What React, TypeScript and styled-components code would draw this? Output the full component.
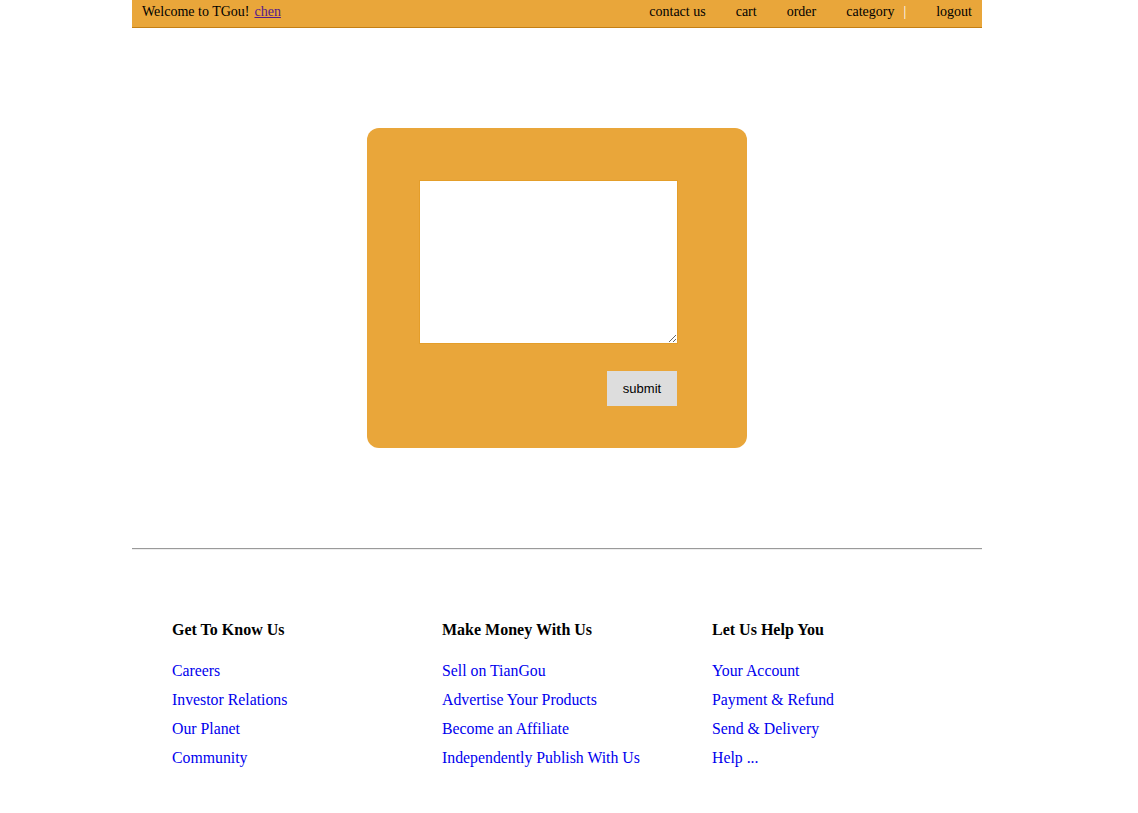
import React from "react";
import styled, { createGlobalStyle } from "styled-components";

const Global = createGlobalStyle`
  html, body { margin: 0; padding: 0; background: #fff; }
  body { font-family: "Liberation Serif", "Times New Roman", serif; font-size: 16px; color: #000; }
`;

const Page = styled.div`
  width: 850px;
  margin-left: 132px;
`;

const TopBar = styled.header`
  display: flex;
  align-items: flex-start;
  justify-content: space-between;
  height: 27px;
  line-height: 23px;
  padding: 0 10px;
  background: #e9a63a;
  border-bottom: 1px solid #c47f14;
  font-size: 14px;
`;

const Welcome = styled.div`
  display: flex;
  gap: 5px;
`;

const UserLink = styled.a`
  color: #551a8b;
  text-decoration: underline;
  font-size: 14px;
`;

const Nav = styled.nav`
  display: flex;
  gap: 30px;
`;

const NavItem = styled.a`
  color: #000;
  text-decoration: none;
`;

const Sep = styled.span`
  color: #fff;
  margin-left: -21px;
`;

const Main = styled.main`
  display: flex;
  justify-content: center;
  padding: 100px 0;
`;

const Panel = styled.form`
  width: 380px;
  height: 320px;
  box-sizing: border-box;
  background: #e9a63a;
  border-radius: 12px;
  padding: 52px 0 0 52px;
  display: flex;
  flex-direction: column;
  align-items: flex-start;
`;

const Area = styled.textarea`
  width: 259px;
  height: 164px;
  box-sizing: border-box;
  border: 1px solid #e49e2a;
  background: #fff;
  outline: none;
  margin: 0;
  padding: 2px;
  resize: both;
  font-family: "Liberation Mono", monospace;
  font-size: 13px;
`;

const SubmitRow = styled.div`
  width: 258px;
  display: flex;
  justify-content: flex-end;
  margin-top: 27px;
`;

const SubmitButton = styled.button`
  width: 70px;
  height: 35px;
  border: none;
  background: #dddddd;
  font-family: "Liberation Sans", Arial, sans-serif;
  font-size: 13px;
  color: #000;
  padding: 0;
  cursor: pointer;
`;

const Rule = styled.hr`
  margin: 0;
  border: none;
  border-top: 1px solid #9a9a9a;
  border-bottom: 1px solid #eeeeee;
`;

const Footer = styled.footer`
  display: grid;
  grid-template-columns: repeat(3, 270px);
  padding: 71px 40px 40px;
`;

const Column = styled.div`
  display: flex;
  flex-direction: column;
`;

const ColTitle = styled.h4`
  margin: 0 0 17px;
  font-size: 16px;
  line-height: 18px;
  font-weight: bold;
`;

const FootLink = styled.a`
  color: #0000ee;
  text-decoration: none;
  font-size: 15.8px;
  line-height: 29px;
`;

const columns = [
  { title: "Get To Know Us", links: ["Careers", "Investor Relations", "Our Planet", "Community"] },
  {
    title: "Make Money With Us",
    links: ["Sell on TianGou", "Advertise Your Products", "Become an Affiliate", "Independently Publish With Us"],
  },
  { title: "Let Us Help You", links: ["Your Account", "Payment & Refund", "Send & Delivery", "Help ..."] },
];

export default function App() {
  return (
    <>
      <Global />
      <Page>
        <TopBar>
          <Welcome>
            <span>Welcome to TGou!</span>
            <UserLink href="#">chen</UserLink>
          </Welcome>
          <Nav>
            <NavItem href="#">contact us</NavItem>
            <NavItem href="#">cart</NavItem>
            <NavItem href="#">order</NavItem>
            <NavItem href="#">category</NavItem>
            <Sep>|</Sep>
            <NavItem href="#">logout</NavItem>
          </Nav>
        </TopBar>
        <Main>
          <Panel onSubmit={(e) => e.preventDefault()}>
            <Area autoFocus />
            <SubmitRow>
              <SubmitButton type="submit">submit</SubmitButton>
            </SubmitRow>
          </Panel>
        </Main>
        <Rule />
        <Footer>
          {columns.map((c) => (
            <Column key={c.title}>
              <ColTitle>{c.title}</ColTitle>
              {c.links.map((l) => (
                <FootLink key={l} href="#">
                  {l}
                </FootLink>
              ))}
            </Column>
          ))}
        </Footer>
      </Page>
    </>
  );
}
